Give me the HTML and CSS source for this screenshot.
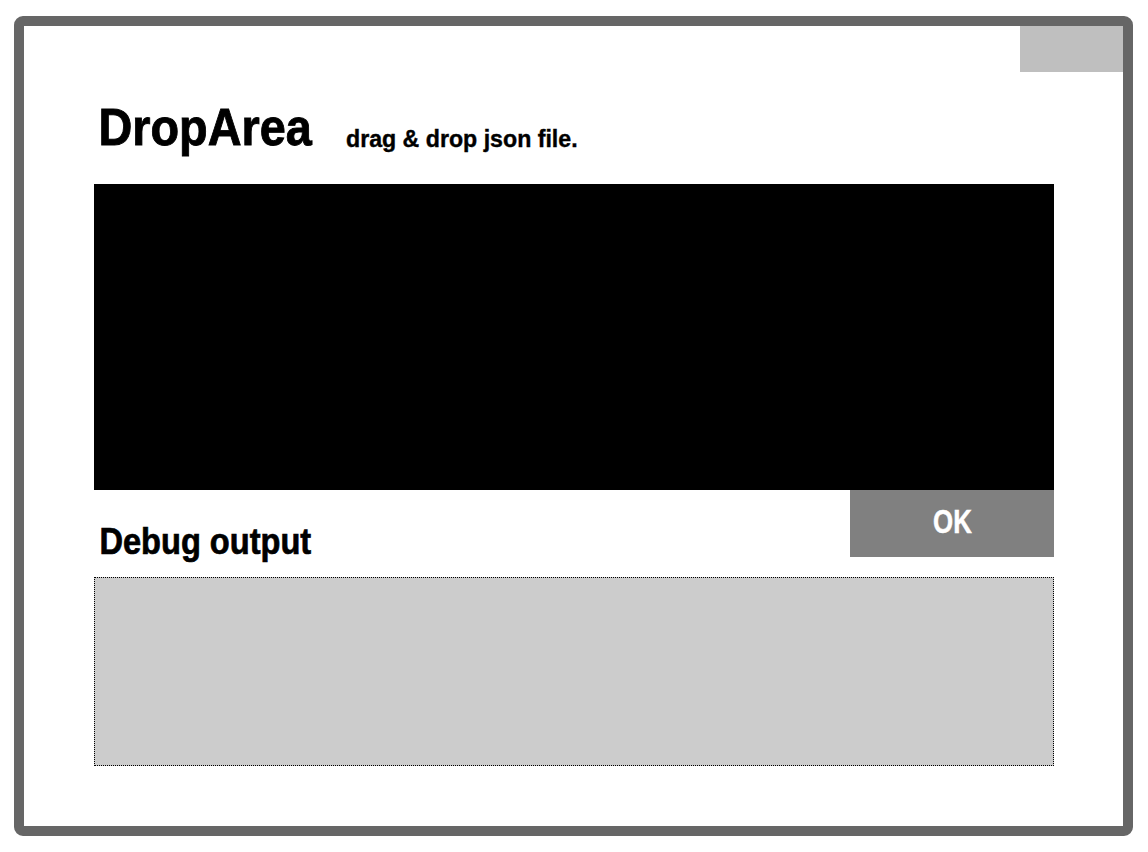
FILE: index.html
```html
<!DOCTYPE html>
<html>
<head>
<meta charset="utf-8">
<link rel="stylesheet" href="styles.css">
</head>
<body>
<div class="frame">
  <div class="topbar"><div class="corner-box"></div></div>
  <div class="content">
    <div class="title-row">
      <h1 class="title">DropArea</h1>
      <span class="subtitle">drag &amp; drop json file.</span>
    </div>
    <div class="drop-area"></div>
    <div class="debug-row">
      <h2 class="debug-title">Debug output</h2>
      <button class="ok-btn"><span class="ok-label">OK</span></button>
    </div>
    <div class="debug-box"></div>
  </div>
</div>
</body>
</html>
```

FILE: styles.css
```css
html, body {
  margin: 0;
  padding: 0;
  background: #ffffff;
}
body {
  font-family: "Liberation Sans", Arial, sans-serif;
  font-weight: bold;
  color: #000;
}
.frame {
  box-sizing: border-box;
  margin: 16px 15px 16px 14px;
  height: 820px;
  border: 10px solid #666666;
  border-radius: 9px;
  background: #ffffff;
}
.topbar {
  display: flex;
  justify-content: flex-end;
  height: 46px;
}
.corner-box {
  width: 103px;
  height: 46px;
  background: #bfbfbf;
}
.content {
  margin-left: 70px;
  width: 960px;
}
.title-row {
  display: flex;
  align-items: flex-start;
  height: 112px;
}
.title {
  margin: 0;
  padding-left: 5px;
  font-size: 52px;
  font-weight: bold;
  line-height: 110px;
  white-space: nowrap;
  -webkit-text-stroke: 0.9px #000;
  transform: scaleX(0.9);
  transform-origin: left center;
}
.subtitle {
  display: inline-block;
  margin-left: 10px;
  padding-top: 55px;
  font-size: 24px;
  line-height: 24px;
  white-space: nowrap;
  -webkit-text-stroke: 0.4px #000;
  transform: scaleX(0.965);
  transform-origin: left center;
}
.drop-area {
  height: 306px;
  background: #000000;
}
.debug-row {
  display: flex;
  justify-content: space-between;
  align-items: flex-start;
  height: 87px;
}
.debug-title {
  margin: 0;
  padding-left: 6px;
  padding-top: 31px;
  font-size: 36px;
  font-weight: bold;
  line-height: 41px;
  white-space: nowrap;
  -webkit-text-stroke: 0.7px #000;
  transform: scaleX(0.905);
  transform-origin: left center;
}
.ok-btn {
  box-sizing: border-box;
  width: 204px;
  height: 67px;
  border: none;
  border-radius: 0;
  background: #808080;
  color: #ffffff;
  font-family: inherit;
  font-size: 34px;
  font-weight: bold;
  line-height: 34px;
  padding: 14px 0 19px 0;
  text-align: center;
}
.ok-label {
  display: inline-block;
  -webkit-text-stroke: 0.5px #ffffff;
  transform: scaleX(0.76);
  transform-origin: center center;
}
.debug-box {
  box-sizing: border-box;
  width: 960px;
  height: 189px;
  background: #cccccc;
  border: 1px dotted #000000;
}
```
